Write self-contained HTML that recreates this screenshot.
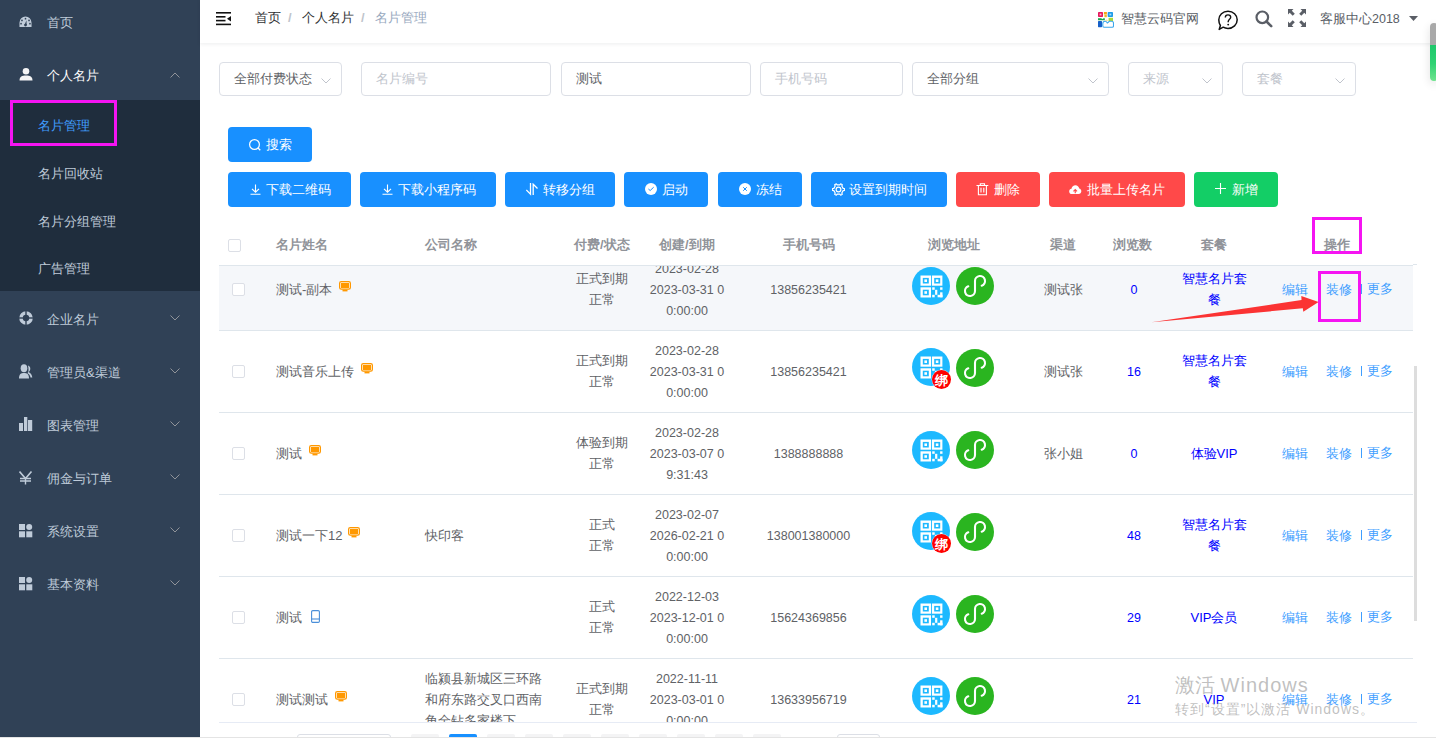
<!DOCTYPE html>
<html><head><meta charset="utf-8"><style>

*{box-sizing:border-box;margin:0;padding:0}
html,body{width:1436px;height:740px;overflow:hidden;background:#fff;font-family:"Liberation Sans",sans-serif;font-size:13px;color:#606266}
.a{position:absolute;white-space:nowrap}
#side{position:absolute;left:0;top:0;width:200px;height:737px;background:#304156;overflow:hidden}
.mi{position:absolute;left:0;width:200px;height:53px;line-height:53px;color:#bfcbd9}
.mi .t{position:absolute;left:47px;top:2px}
.mi svg{position:absolute;left:19px}
.mi .chev{position:absolute;left:170px}
#sub{position:absolute;left:0;top:100px;width:200px;height:191px;background:#1f2d3d}
.si{position:absolute;left:38px;height:20px;line-height:20px;color:#bfcbd9}
.box{position:absolute;border:3px solid #f514f2}
.inp{position:absolute;top:62px;height:34px;border:1px solid #dcdfe6;border-radius:4px;background:#fff;line-height:32px;padding-left:14px;color:#606266}
.inp.ph{color:#c0c4cc}
.inp svg{position:absolute;top:15px}
.btn{position:absolute;height:35px;border-radius:4px;background:#1890ff;color:#fff;line-height:35px}
.btn.red{background:#ff4949}
.btn.grn{background:#13ce66}
.btn svg{position:absolute}
.btn .t{position:absolute;left:38px;top:0}
.th{position:absolute;top:235px;line-height:20px;color:#909399;font-weight:bold}
.ln{position:absolute;line-height:21px;white-space:nowrap}
.c{text-align:center}
.rowb{position:absolute;left:219px;width:1194px;height:1px;background:#ebeef5}
.cb{position:absolute;width:13px;height:13px;border:1px solid #dcdfe6;border-radius:2px;background:#fff}
.lk{color:#409eff}
.blue{color:#0000ff}

</style></head><body>
<div id="side">
<div class="mi" style="top:-6px">
    <svg style="top:21.5px" width="13" height="11.5" viewBox="0 0 14 12" preserveAspectRatio="none"><path d="M7 0.5A6.5 6.5 0 0 0 0.5 7v4.5h13V7A6.5 6.5 0 0 0 7 0.5z" fill="#bfcbd9"/><circle cx="7" cy="2.8" r="0.9" fill="#304156"/><circle cx="3.2" cy="4.6" r="0.9" fill="#304156"/><circle cx="10.8" cy="4.6" r="0.9" fill="#304156"/><circle cx="2.2" cy="8" r="0.9" fill="#304156"/><circle cx="11.8" cy="8" r="0.9" fill="#304156"/><path d="M6 9.5L8 4.5L8.2 9.5z" fill="#304156"/><circle cx="7" cy="9.5" r="1.5" fill="#304156"/></svg>
    <span class="t">首页</span></div>
<div class="mi" style="top:47px;color:#fff">
    <svg style="top:21px" width="14" height="13" viewBox="0 0 14 13"><circle cx="7" cy="3.3" r="3.3" fill="#f4f4f5"/><path d="M0.5 12.5C0.5 8.5 3 7.5 7 7.5S13.5 8.5 13.5 12.5z" fill="#f4f4f5"/></svg>
    <span class="t">个人名片</span>
    <svg class="chev" style="top:25px" width="10" height="6" viewBox="0 0 10 6"><path d="M0.5 5.5L5 1L9.5 5.5" stroke="#909399" stroke-width="1" fill="none"/></svg></div>
<div id="sub">
    <div class="si" style="top:16px;color:#409eff">名片管理</div>
    <div class="si" style="top:64px">名片回收站</div>
    <div class="si" style="top:112px">名片分组管理</div>
    <div class="si" style="top:159px">广告管理</div></div>
<div class="mi" style="top:291px"><svg style="top:20px" width="14" height="14" viewBox="0 0 14 14"><circle cx="7" cy="7" r="5" stroke="#bfcbd9" stroke-width="3.6" fill="none"/><rect x="6.3" y="0" width="1.4" height="14" fill="#304156"/><rect x="0" y="6.3" width="14" height="1.4" fill="#304156"/></svg><span class="t">企业名片</span><svg class="chev" style="top:24px" width="10" height="6" viewBox="0 0 10 6"><path d="M0.5 0.5L5 5L9.5 0.5" stroke="#909399" stroke-width="1" fill="none"/></svg></div>
<div class="mi" style="top:344px"><svg style="top:20px" width="14" height="15" viewBox="0 0 14 15"><ellipse cx="5" cy="4.3" rx="3.3" ry="4" fill="#bfcbd9"/><path d="M0 14.5C0 10 2 9 5 9S10 10 10 14.5z" fill="#bfcbd9"/><path d="M9 1.5C10.5 2 11.3 3 11.3 4.8C11.3 6.3 10.5 7.5 9.5 8C12 9 13 11 13.3 13.5H11.5C11.2 11.5 10.3 10 8.5 9.2C9.5 8 10 6.5 9 1.5z" fill="#bfcbd9"/></svg><span class="t">管理员&amp;渠道</span><svg class="chev" style="top:24px" width="10" height="6" viewBox="0 0 10 6"><path d="M0.5 0.5L5 5L9.5 0.5" stroke="#909399" stroke-width="1" fill="none"/></svg></div>
<div class="mi" style="top:397px"><svg style="top:20px" width="14" height="14" viewBox="0 0 14 14"><rect x="0" y="6" width="4" height="8" fill="#bfcbd9"/><rect x="5" y="0" width="3.3" height="14" fill="#bfcbd9"/><rect x="9" y="3" width="4.2" height="11" fill="#bfcbd9"/></svg><span class="t">图表管理</span><svg class="chev" style="top:24px" width="10" height="6" viewBox="0 0 10 6"><path d="M0.5 0.5L5 5L9.5 0.5" stroke="#909399" stroke-width="1" fill="none"/></svg></div>
<div class="mi" style="top:450px"><svg style="top:21px" width="14" height="14" viewBox="0 0 14 14"><path d="M0.5 0.5L6.5 7.5L12.5 0.5" stroke="#bfcbd9" stroke-width="1.6" fill="none"/><path d="M1 7.5H12M1 10H12M6.5 7.5V13.5" stroke="#bfcbd9" stroke-width="1.4" fill="none"/></svg><span class="t">佣金与订单</span><svg class="chev" style="top:24px" width="10" height="6" viewBox="0 0 10 6"><path d="M0.5 0.5L5 5L9.5 0.5" stroke="#909399" stroke-width="1" fill="none"/></svg></div>
<div class="mi" style="top:503px"><svg style="top:21px" width="14" height="14" viewBox="0 0 14 14"><rect x="0" y="0" width="6" height="6" fill="#bfcbd9"/><circle cx="10.2" cy="3" r="3" fill="#bfcbd9"/><rect x="0" y="7.3" width="6" height="6" fill="#bfcbd9"/><rect x="7.3" y="7.3" width="6" height="6" fill="#bfcbd9"/></svg><span class="t">系统设置</span><svg class="chev" style="top:24px" width="10" height="6" viewBox="0 0 10 6"><path d="M0.5 0.5L5 5L9.5 0.5" stroke="#909399" stroke-width="1" fill="none"/></svg></div>
<div class="mi" style="top:556px"><svg style="top:21px" width="14" height="14" viewBox="0 0 14 14"><rect x="0" y="0" width="6" height="6" fill="#bfcbd9"/><circle cx="10.2" cy="3" r="3" fill="#bfcbd9"/><rect x="0" y="7.3" width="6" height="6" fill="#bfcbd9"/><rect x="7.3" y="7.3" width="6" height="6" fill="#bfcbd9"/></svg><span class="t">基本资料</span><svg class="chev" style="top:24px" width="10" height="6" viewBox="0 0 10 6"><path d="M0.5 0.5L5 5L9.5 0.5" stroke="#909399" stroke-width="1" fill="none"/></svg></div>
</div>
<div class="box" style="left:10px;top:100px;width:107px;height:46px"></div>

<div class="a" style="left:200px;top:0;width:1236px;height:43px;background:#fff;box-shadow:0 1px 4px rgba(0,21,41,.08)"></div>
<svg class="a" style="left:216px;top:11px" width="16" height="15" viewBox="0 0 16 15"><rect x="0" y="1" width="15" height="1.6" fill="#111"/><rect x="0" y="5" width="9.5" height="1.6" fill="#111"/><rect x="0" y="8.8" width="9.5" height="1.6" fill="#111"/><rect x="0" y="12.6" width="15" height="1.6" fill="#111"/><path d="M15 5L11 7.7L15 10.4z" fill="#111"/></svg>
<div class="a" style="left:255px;top:8px;line-height:20px;color:#303133">首页</div>
<div class="a" style="left:288px;top:8px;line-height:20px;color:#c0c4cc;font-weight:bold">/</div>
<div class="a" style="left:302px;top:8px;line-height:20px;color:#303133">个人名片</div>
<div class="a" style="left:361px;top:8px;line-height:20px;color:#c0c4cc;font-weight:bold">/</div>
<div class="a" style="left:375px;top:8px;line-height:20px;color:#97a8be">名片管理</div>


<svg class="a" style="left:1097px;top:11px" width="17" height="17" viewBox="0 0 17 17"><rect x="1" y="1" width="5" height="5" rx="0.8" fill="#e5195e"/><rect x="2.6" y="2.6" width="1.8" height="1.8" fill="#f7b3c8"/><rect x="6.9" y="1" width="3" height="2.4" fill="#f5a614"/><rect x="7.4" y="3.6" width="2.4" height="2.6" fill="#f5b323"/><rect x="10.7" y="1" width="5.3" height="5" rx="0.8" fill="#1e9be8"/><rect x="12.4" y="2.6" width="1.9" height="1.8" fill="#a9dcf7"/><path d="M1 7.2H4.5L5 8.2L6.5 7.2H7.8V9.3H1z" fill="#17a64a"/><rect x="11.6" y="6.8" width="4.4" height="3.6" fill="#a7d93a"/><path d="M7.8 9.6C8.6 8.5 10.5 8.5 11.3 9.6z" fill="#f8c13c"/><rect x="1" y="10" width="4" height="6.2" rx="0.6" fill="#1660c9"/><path d="M7 16.2H15.2C16 16.2 16.5 15.6 16.5 14.9V12.2C16.5 11.2 15.8 10.3 14.6 10.3H12.8C12.3 10.3 11.9 10.6 11.6 11L10.3 12C9.9 11.2 9.2 10.3 8 10.3C6.8 10.3 5.8 11.4 5.8 12.8V15C5.8 15.7 6.3 16.2 7 16.2z" fill="#fff" stroke="#3aa6ec" stroke-width="1.1"/></svg>
<div class="a" style="left:1121px;top:9px;line-height:20px;color:#5a5e66">智慧云码官网</div>
<svg class="a" style="left:1217px;top:10px" width="22" height="21" viewBox="0 0 22 21"><path d="M11 1.2C16.2 1.2 20.2 5 20.2 9.8C20.2 14.6 16.2 18.4 11 18.4C9 18.4 7.5 18 6.2 17.2L2.2 19.4L3.4 15.5C2.3 13.9 1.8 12 1.8 9.8C1.8 5 5.8 1.2 11 1.2z" stroke="#111" stroke-width="1.5" fill="none" stroke-linejoin="round"/><path d="M8.3 7.6C8.3 6 9.5 4.9 11 4.9C12.5 4.9 13.7 5.9 13.7 7.3C13.7 9.2 11.2 9.5 11.2 11.6V12.3" stroke="#111" stroke-width="1.4" fill="none"/><circle cx="11.2" cy="14.6" r="0.95" fill="#111"/></svg>
<svg class="a" style="left:1255px;top:10px" width="18" height="18" viewBox="0 0 18 18"><circle cx="7.3" cy="7.3" r="5.8" stroke="#5a5e66" stroke-width="2.2" fill="none"/><path d="M11.5 11.5L16.2 16.2" stroke="#5a5e66" stroke-width="2.6" stroke-linecap="round"/></svg>
<svg class="a" style="left:1288px;top:9px" width="18" height="18" viewBox="0 0 18 18"><g fill="#5a5e66"><path d="M0 0H5.5L3.8 1.7L6.8 4.7L4.7 6.8L1.7 3.8L0 5.5z"/><path d="M18 0V5.5L16.3 3.8L13.3 6.8L11.2 4.7L14.2 1.7L12.5 0z"/><path d="M0 18V12.5L1.7 14.2L4.7 11.2L6.8 13.3L3.8 16.3L5.5 18z"/><path d="M18 18H12.5L14.2 16.3L11.2 13.3L13.3 11.2L16.3 14.2L18 12.5z"/></g></svg>
<div class="a" style="left:1320px;top:9px;line-height:20px;color:#5a5e66">客服中心<span style="font-size:12.5px">2018</span></div>
<svg class="a" style="left:1409px;top:16px" width="9" height="5" viewBox="0 0 9 5"><path d="M0 0H9L4.5 5z" fill="#5a5e66"/></svg>
<div class="a" style="left:1430px;top:23px;width:8px;height:58px;border-radius:4px;box-shadow:0 3px 10px rgba(0,0,0,.12)"></div>
<div class="a" style="left:1430px;top:23px;width:8px;height:58px;border-radius:4px;background:linear-gradient(#a9a9a9 0,#a9a9a9 38%,#1ec76b 38%,#2fd273 70%,#6fe38e 100%)"></div>

<div class="inp" style="left:219px;width:123px">全部付费状态<svg style="left:101px" width="10" height="6" viewBox="0 0 10 6"><path d="M0.5 0.5L5 5L9.5 0.5" stroke="#c0c4cc" stroke-width="1" fill="none"/></svg></div>
<div class="inp ph" style="left:361px;width:190px">名片编号</div>
<div class="inp" style="left:561px;width:190px">测试</div>
<div class="inp ph" style="left:760px;width:143px">手机号码</div>
<div class="inp" style="left:912px;width:197px">全部分组<svg style="left:175px" width="10" height="6" viewBox="0 0 10 6"><path d="M0.5 0.5L5 5L9.5 0.5" stroke="#c0c4cc" stroke-width="1" fill="none"/></svg></div>
<div class="inp ph" style="left:1128px;width:95px">来源<svg style="left:73px" width="10" height="6" viewBox="0 0 10 6"><path d="M0.5 0.5L5 5L9.5 0.5" stroke="#c0c4cc" stroke-width="1" fill="none"/></svg></div>
<div class="inp ph" style="left:1242px;width:114px">套餐<svg style="left:92px" width="10" height="6" viewBox="0 0 10 6"><path d="M0.5 0.5L5 5L9.5 0.5" stroke="#c0c4cc" stroke-width="1" fill="none"/></svg></div>
<div class="btn" style="left:228px;top:127px;width:84px"><svg style="left:21px;top:12px" width="12" height="12" viewBox="0 0 12 12"><circle cx="5.5" cy="5.5" r="4.9" stroke="#fff" stroke-width="1.2" fill="none"/><path d="M9 9L11.3 11.3" stroke="#fff" stroke-width="1.3"/></svg><span class="t">搜索</span></div>
<div class="btn " style="left:228px;top:172px;width:123px"><svg style="left:22px;top:12px" width="11" height="11" viewBox="0 0 11 11"><path d="M5.5 0.5V8M2 4.8L5.5 8.2L9 4.8M0.5 10.3H10.5" stroke="#fff" stroke-width="1.1" fill="none"/></svg><span class="t">下载二维码</span></div>
<div class="btn " style="left:360px;top:172px;width:136px"><svg style="left:22px;top:12px" width="11" height="11" viewBox="0 0 11 11"><path d="M5.5 0.5V8M2 4.8L5.5 8.2L9 4.8M0.5 10.3H10.5" stroke="#fff" stroke-width="1.1" fill="none"/></svg><span class="t">下载小程序码</span></div>
<div class="btn " style="left:505px;top:172px;width:110px"><svg style="left:21px;top:11px" width="12" height="13" viewBox="0 0 12 13"><path d="M4.5 0V11.2L0.3 7M7.2 12V1.2L11.5 5.5" stroke="#fff" stroke-width="1.3" fill="none"/></svg><span class="t">转移分组</span></div>
<div class="btn " style="left:624px;top:172px;width:84px"><svg style="left:21px;top:11px" width="12" height="12" viewBox="0 0 12 12"><circle cx="6" cy="6" r="6" fill="#fff"/><path d="M3.4 6L5.2 7.5L8.7 4.2" stroke="#1890ff" stroke-width="1" fill="none"/></svg><span class="t">启动</span></div>
<div class="btn " style="left:718px;top:172px;width:84px"><svg style="left:21px;top:11px" width="12" height="12" viewBox="0 0 12 12"><circle cx="6" cy="6" r="6" fill="#fff"/><path d="M4.2 4.2L7.8 7.8M7.8 4.2L4.2 7.8" stroke="#1890ff" stroke-width="1" fill="none"/></svg><span class="t">冻结</span></div>
<div class="btn " style="left:811px;top:172px;width:136px"><svg style="left:21px;top:11px" width="13" height="13" viewBox="0 0 12 12"><path d="M10.27 4.94L11.53 5.12L11.53 6.88L10.27 7.06L9.06 9.17L9.52 10.35L8.01 11.23L7.21 10.23L4.79 10.23L3.99 11.23L2.48 10.35L2.94 9.17L1.73 7.06L0.47 6.88L0.47 5.12L1.73 4.94L2.94 2.83L2.48 1.65L3.99 0.77L4.79 1.77L7.21 1.77L8.01 0.77L9.52 1.65L9.06 2.83z" stroke="#fff" stroke-width="1.1" fill="none" stroke-linejoin="round"/><circle cx="6" cy="6" r="2.2" stroke="#fff" stroke-width="1.1" fill="none"/></svg><span class="t">设置到期时间</span></div>
<div class="btn red" style="left:956px;top:172px;width:84px"><svg style="left:20px;top:11px" width="13" height="13" viewBox="0 0 13 13"><path d="M0.5 2.5H12.3M4.3 2.5V0.7H8.5V2.5M2.4 2.5V11.8H10.4V2.5M5 4.8V9.5M7.8 4.8V9.5" stroke="#fff" stroke-width="1.1" fill="none"/></svg><span class="t">删除</span></div>
<div class="btn red" style="left:1049px;top:172px;width:136px"><svg style="left:20px;top:13px" width="12.5" height="9.5" viewBox="0 0 14 11" preserveAspectRatio="none"><path d="M3.5 10.5C1.5 10.5 0.2 9.2 0.2 7.4C0.2 5.8 1.3 4.6 2.8 4.4C3.2 2 5 0.3 7.2 0.3C9.4 0.3 11.1 1.9 11.4 4C12.9 4.2 13.8 5.6 13.8 7.2C13.8 9 12.5 10.5 10.7 10.5z" fill="#fff"/><path d="M7 9.5V5.5M5 7.3L7 5.3L9 7.3" stroke="#ff4949" stroke-width="1.3" fill="none"/></svg><span class="t">批量上传名片</span></div>
<div class="btn grn" style="left:1194px;top:172px;width:84px"><svg style="left:21px;top:11px" width="11" height="11" viewBox="0 0 11 11"><path d="M5.5 0V11M0 5.5H11" stroke="#fff" stroke-width="1.1"/></svg><span class="t">新增</span></div>
<div class="cb" style="left:228px;top:239px"></div>
<div class="th" style="left:276px">名片姓名</div>
<div class="th" style="left:425px">公司名称</div>
<div class="th" style="left:574px">付费/状态</div>
<div class="th" style="left:659px">创建/到期</div>
<div class="th" style="left:783px">手机号码</div>
<div class="th" style="left:928px">浏览地址</div>
<div class="th" style="left:1050px">渠道</div>
<div class="th" style="left:1113px">浏览数</div>
<div class="th" style="left:1201px">套餐</div>
<div class="th" style="left:1324px">操作</div>
<div class="a" style="left:219px;top:265px;width:1194px;height:1px;background:#dfe6ec"></div><div class="a" style="left:1413px;top:264px;width:4px;height:1px;background:#dfe6ec"></div>
<div class="a" style="left:0;top:266px;width:1436px;height:456px;overflow:hidden">
<div class="a" style="left:219px;top:-18px;width:1194px;height:82px;background:#f5f7fa"></div>
<div class="a" style="left:219px;top:64px;width:1194px;height:1px;background:#dfe6ec"></div>
<div class="cb" style="left:232px;top:17px"></div>
<div class="ln" style="left:276px;top:12.5px">测试-副本</div>
<svg class="a" style="left:339px;top:15px" width="12" height="11" viewBox="0 0 12 11"><rect x="0.6" y="0.6" width="10.8" height="7.6" rx="1.6" stroke="#ff9800" stroke-width="1.2" fill="#fff3e0"/><rect x="2" y="2" width="8" height="5" fill="#ff9800"/><rect x="3.5" y="8.6" width="5" height="1.8" fill="#ff9800"/></svg>
<div class="ln c " style="top:2.0px;left:502px;width:200px;">正式到期</div>
<div class="ln c " style="top:23.0px;left:502px;width:200px;">正常</div>
<div class="ln c " style="top:-8.5px;left:587px;width:200px;font-size:12.5px;margin-top:1px;">2023-02-28</div>
<div class="ln c " style="top:12.5px;left:587px;width:200px;font-size:12.5px;margin-top:1px;">2023-03-31 0</div>
<div class="ln c " style="top:33.5px;left:587px;width:200px;font-size:12.5px;margin-top:1px;">0:00:00</div>
<div class="ln c " style="top:12.5px;left:708.5px;width:200px;font-size:12.5px;margin-top:1px;">13856235421</div>
<svg class="a" style="left:912px;top:1px" width="40" height="42" viewBox="0 0 40 42"><circle cx="19" cy="19" r="19" fill="#1db9ff"/><rect x="8.5" y="8.5" width="10.5" height="10.2" fill="#fff"/><rect x="10.8" y="10.9" width="6" height="5.6" fill="#1db9ff"/><rect x="12.4" y="12.4" width="2.6" height="2.6" fill="#fff"/><rect x="19.9" y="8.5" width="10.5" height="10.2" fill="#fff"/><rect x="22.2" y="10.9" width="6" height="5.6" fill="#1db9ff"/><rect x="23.799999999999997" y="12.4" width="2.6" height="2.6" fill="#fff"/><rect x="8.5" y="20.3" width="10.5" height="10.2" fill="#fff"/><rect x="10.8" y="22.7" width="6" height="5.6" fill="#1db9ff"/><rect x="12.4" y="24.2" width="2.6" height="2.6" fill="#fff"/><rect x="20.2" y="20.3" width="2.5" height="2.5" fill="#fff"/><rect x="28.1" y="20.3" width="2.4" height="2.5" fill="#fff"/><rect x="23.1" y="22.8" width="2.2" height="5" fill="#fff"/><rect x="25.6" y="27.8" width="4.9" height="2.5" fill="#fff"/><rect x="28.1" y="25.3" width="2.4" height="5" fill="#fff"/><rect x="20.2" y="27.8" width="2.5" height="2.5" fill="#fff"/></svg>
<svg class="a" style="left:956px;top:1px" width="38" height="38" viewBox="0 0 38 38"><circle cx="19" cy="19" r="19" fill="#2ab520"/><path d="M12.3 19.3A5 5 0 1 0 19 24V14A5 5 0 1 1 25.7 18.7" stroke="#fff" stroke-width="2.1" fill="none" stroke-linecap="round"/></svg>
<div class="ln c " style="top:12.5px;left:963px;width:200px;">测试张</div>
<div class="ln c blue" style="top:12.5px;left:1034px;width:200px;font-size:12.5px;margin-top:1px;">0</div>
<div class="ln c blue" style="top:2.0px;left:1114px;width:200px;">智慧名片套</div>
<div class="ln c blue" style="top:23.0px;left:1114px;width:200px;">餐</div>
<div class="ln lk" style="left:1282px;top:12.5px">编辑</div>
<div class="ln lk" style="left:1326px;top:12.5px">装修</div>
<div class="a" style="left:1361px;top:18px;width:1.3px;height:10px;background:#409eff"></div>
<div class="ln lk" style="left:1367px;top:11.5px">更多</div>
<div class="a" style="left:219px;top:146px;width:1194px;height:1px;background:#dfe6ec"></div>
<div class="cb" style="left:232px;top:99px"></div>
<div class="ln" style="left:276px;top:94.5px">测试音乐上传</div>
<svg class="a" style="left:361px;top:97px" width="12" height="11" viewBox="0 0 12 11"><rect x="0.6" y="0.6" width="10.8" height="7.6" rx="1.6" stroke="#ff9800" stroke-width="1.2" fill="#fff3e0"/><rect x="2" y="2" width="8" height="5" fill="#ff9800"/><rect x="3.5" y="8.6" width="5" height="1.8" fill="#ff9800"/></svg>
<div class="ln c " style="top:84.0px;left:502px;width:200px;">正式到期</div>
<div class="ln c " style="top:105.0px;left:502px;width:200px;">正常</div>
<div class="ln c " style="top:73.5px;left:587px;width:200px;font-size:12.5px;margin-top:1px;">2023-02-28</div>
<div class="ln c " style="top:94.5px;left:587px;width:200px;font-size:12.5px;margin-top:1px;">2023-03-31 0</div>
<div class="ln c " style="top:115.5px;left:587px;width:200px;font-size:12.5px;margin-top:1px;">0:00:00</div>
<div class="ln c " style="top:94.5px;left:708.5px;width:200px;font-size:12.5px;margin-top:1px;">13856235421</div>
<svg class="a" style="left:912px;top:82px" width="40" height="42" viewBox="0 0 40 42"><circle cx="19" cy="19" r="19" fill="#1db9ff"/><rect x="8.5" y="8.5" width="10.5" height="10.2" fill="#fff"/><rect x="10.8" y="10.9" width="6" height="5.6" fill="#1db9ff"/><rect x="12.4" y="12.4" width="2.6" height="2.6" fill="#fff"/><rect x="19.9" y="8.5" width="10.5" height="10.2" fill="#fff"/><rect x="22.2" y="10.9" width="6" height="5.6" fill="#1db9ff"/><rect x="23.799999999999997" y="12.4" width="2.6" height="2.6" fill="#fff"/><rect x="8.5" y="20.3" width="10.5" height="10.2" fill="#fff"/><rect x="10.8" y="22.7" width="6" height="5.6" fill="#1db9ff"/><rect x="12.4" y="24.2" width="2.6" height="2.6" fill="#fff"/><rect x="20.2" y="20.3" width="2.5" height="2.5" fill="#fff"/><rect x="28.1" y="20.3" width="2.4" height="2.5" fill="#fff"/><rect x="23.1" y="22.8" width="2.2" height="5" fill="#fff"/><rect x="25.6" y="27.8" width="4.9" height="2.5" fill="#fff"/><rect x="28.1" y="25.3" width="2.4" height="5" fill="#fff"/><rect x="20.2" y="27.8" width="2.5" height="2.5" fill="#fff"/><circle cx="29.5" cy="31.5" r="10" fill="#fff" fill-opacity="0.6"/><circle cx="29.5" cy="31.5" r="9.5" fill="#f00"/><text x="29.5" y="36.6" text-anchor="middle" font-size="12.5" fill="#fff" font-family="Liberation Sans, sans-serif" font-weight="bold">绑</text></svg>
<svg class="a" style="left:956px;top:83px" width="38" height="38" viewBox="0 0 38 38"><circle cx="19" cy="19" r="19" fill="#2ab520"/><path d="M12.3 19.3A5 5 0 1 0 19 24V14A5 5 0 1 1 25.7 18.7" stroke="#fff" stroke-width="2.1" fill="none" stroke-linecap="round"/></svg>
<div class="ln c " style="top:94.5px;left:963px;width:200px;">测试张</div>
<div class="ln c blue" style="top:94.5px;left:1034px;width:200px;font-size:12.5px;margin-top:1px;">16</div>
<div class="ln c blue" style="top:84.0px;left:1114px;width:200px;">智慧名片套</div>
<div class="ln c blue" style="top:105.0px;left:1114px;width:200px;">餐</div>
<div class="ln lk" style="left:1282px;top:94.5px">编辑</div>
<div class="ln lk" style="left:1326px;top:94.5px">装修</div>
<div class="a" style="left:1361px;top:100px;width:1.3px;height:10px;background:#409eff"></div>
<div class="ln lk" style="left:1367px;top:93.5px">更多</div>
<div class="a" style="left:219px;top:228px;width:1194px;height:1px;background:#dfe6ec"></div>
<div class="cb" style="left:232px;top:181px"></div>
<div class="ln" style="left:276px;top:176.5px">测试</div>
<svg class="a" style="left:309px;top:179px" width="12" height="11" viewBox="0 0 12 11"><rect x="0.6" y="0.6" width="10.8" height="7.6" rx="1.6" stroke="#ff9800" stroke-width="1.2" fill="#fff3e0"/><rect x="2" y="2" width="8" height="5" fill="#ff9800"/><rect x="3.5" y="8.6" width="5" height="1.8" fill="#ff9800"/></svg>
<div class="ln c " style="top:166.0px;left:502px;width:200px;">体验到期</div>
<div class="ln c " style="top:187.0px;left:502px;width:200px;">正常</div>
<div class="ln c " style="top:155.5px;left:587px;width:200px;font-size:12.5px;margin-top:1px;">2023-02-28</div>
<div class="ln c " style="top:176.5px;left:587px;width:200px;font-size:12.5px;margin-top:1px;">2023-03-07 0</div>
<div class="ln c " style="top:197.5px;left:587px;width:200px;font-size:12.5px;margin-top:1px;">9:31:43</div>
<div class="ln c " style="top:176.5px;left:708.5px;width:200px;font-size:12.5px;margin-top:1px;">1388888888</div>
<svg class="a" style="left:912px;top:165px" width="40" height="42" viewBox="0 0 40 42"><circle cx="19" cy="19" r="19" fill="#1db9ff"/><rect x="8.5" y="8.5" width="10.5" height="10.2" fill="#fff"/><rect x="10.8" y="10.9" width="6" height="5.6" fill="#1db9ff"/><rect x="12.4" y="12.4" width="2.6" height="2.6" fill="#fff"/><rect x="19.9" y="8.5" width="10.5" height="10.2" fill="#fff"/><rect x="22.2" y="10.9" width="6" height="5.6" fill="#1db9ff"/><rect x="23.799999999999997" y="12.4" width="2.6" height="2.6" fill="#fff"/><rect x="8.5" y="20.3" width="10.5" height="10.2" fill="#fff"/><rect x="10.8" y="22.7" width="6" height="5.6" fill="#1db9ff"/><rect x="12.4" y="24.2" width="2.6" height="2.6" fill="#fff"/><rect x="20.2" y="20.3" width="2.5" height="2.5" fill="#fff"/><rect x="28.1" y="20.3" width="2.4" height="2.5" fill="#fff"/><rect x="23.1" y="22.8" width="2.2" height="5" fill="#fff"/><rect x="25.6" y="27.8" width="4.9" height="2.5" fill="#fff"/><rect x="28.1" y="25.3" width="2.4" height="5" fill="#fff"/><rect x="20.2" y="27.8" width="2.5" height="2.5" fill="#fff"/></svg>
<svg class="a" style="left:956px;top:165px" width="38" height="38" viewBox="0 0 38 38"><circle cx="19" cy="19" r="19" fill="#2ab520"/><path d="M12.3 19.3A5 5 0 1 0 19 24V14A5 5 0 1 1 25.7 18.7" stroke="#fff" stroke-width="2.1" fill="none" stroke-linecap="round"/></svg>
<div class="ln c " style="top:176.5px;left:963px;width:200px;">张小姐</div>
<div class="ln c blue" style="top:176.5px;left:1034px;width:200px;font-size:12.5px;margin-top:1px;">0</div>
<div class="ln c blue" style="top:176.5px;left:1114px;width:200px;">体验VIP</div>
<div class="ln lk" style="left:1282px;top:176.5px">编辑</div>
<div class="ln lk" style="left:1326px;top:176.5px">装修</div>
<div class="a" style="left:1361px;top:182px;width:1.3px;height:10px;background:#409eff"></div>
<div class="ln lk" style="left:1367px;top:175.5px">更多</div>
<div class="a" style="left:219px;top:310px;width:1194px;height:1px;background:#dfe6ec"></div>
<div class="cb" style="left:232px;top:263px"></div>
<div class="ln" style="left:276px;top:258.5px">测试一下12</div>
<svg class="a" style="left:348px;top:261px" width="12" height="11" viewBox="0 0 12 11"><rect x="0.6" y="0.6" width="10.8" height="7.6" rx="1.6" stroke="#ff9800" stroke-width="1.2" fill="#fff3e0"/><rect x="2" y="2" width="8" height="5" fill="#ff9800"/><rect x="3.5" y="8.6" width="5" height="1.8" fill="#ff9800"/></svg>
<div class="ln " style="top:258.5px;left:425px;">快印客</div>
<div class="ln c " style="top:248.0px;left:502px;width:200px;">正式</div>
<div class="ln c " style="top:269.0px;left:502px;width:200px;">正常</div>
<div class="ln c " style="top:237.5px;left:587px;width:200px;font-size:12.5px;margin-top:1px;">2023-02-07</div>
<div class="ln c " style="top:258.5px;left:587px;width:200px;font-size:12.5px;margin-top:1px;">2026-02-21 0</div>
<div class="ln c " style="top:279.5px;left:587px;width:200px;font-size:12.5px;margin-top:1px;">0:00:00</div>
<div class="ln c " style="top:258.5px;left:708.5px;width:200px;font-size:12.5px;margin-top:1px;">138001380000</div>
<svg class="a" style="left:912px;top:246px" width="40" height="42" viewBox="0 0 40 42"><circle cx="19" cy="19" r="19" fill="#1db9ff"/><rect x="8.5" y="8.5" width="10.5" height="10.2" fill="#fff"/><rect x="10.8" y="10.9" width="6" height="5.6" fill="#1db9ff"/><rect x="12.4" y="12.4" width="2.6" height="2.6" fill="#fff"/><rect x="19.9" y="8.5" width="10.5" height="10.2" fill="#fff"/><rect x="22.2" y="10.9" width="6" height="5.6" fill="#1db9ff"/><rect x="23.799999999999997" y="12.4" width="2.6" height="2.6" fill="#fff"/><rect x="8.5" y="20.3" width="10.5" height="10.2" fill="#fff"/><rect x="10.8" y="22.7" width="6" height="5.6" fill="#1db9ff"/><rect x="12.4" y="24.2" width="2.6" height="2.6" fill="#fff"/><rect x="20.2" y="20.3" width="2.5" height="2.5" fill="#fff"/><rect x="28.1" y="20.3" width="2.4" height="2.5" fill="#fff"/><rect x="23.1" y="22.8" width="2.2" height="5" fill="#fff"/><rect x="25.6" y="27.8" width="4.9" height="2.5" fill="#fff"/><rect x="28.1" y="25.3" width="2.4" height="5" fill="#fff"/><rect x="20.2" y="27.8" width="2.5" height="2.5" fill="#fff"/><circle cx="29.5" cy="31.5" r="10" fill="#fff" fill-opacity="0.6"/><circle cx="29.5" cy="31.5" r="9.5" fill="#f00"/><text x="29.5" y="36.6" text-anchor="middle" font-size="12.5" fill="#fff" font-family="Liberation Sans, sans-serif" font-weight="bold">绑</text></svg>
<svg class="a" style="left:956px;top:247px" width="38" height="38" viewBox="0 0 38 38"><circle cx="19" cy="19" r="19" fill="#2ab520"/><path d="M12.3 19.3A5 5 0 1 0 19 24V14A5 5 0 1 1 25.7 18.7" stroke="#fff" stroke-width="2.1" fill="none" stroke-linecap="round"/></svg>
<div class="ln c blue" style="top:258.5px;left:1034px;width:200px;font-size:12.5px;margin-top:1px;">48</div>
<div class="ln c blue" style="top:248.0px;left:1114px;width:200px;">智慧名片套</div>
<div class="ln c blue" style="top:269.0px;left:1114px;width:200px;">餐</div>
<div class="ln lk" style="left:1282px;top:258.5px">编辑</div>
<div class="ln lk" style="left:1326px;top:258.5px">装修</div>
<div class="a" style="left:1361px;top:264px;width:1.3px;height:10px;background:#409eff"></div>
<div class="ln lk" style="left:1367px;top:257.5px">更多</div>
<div class="a" style="left:219px;top:392px;width:1194px;height:1px;background:#dfe6ec"></div>
<div class="cb" style="left:232px;top:345px"></div>
<div class="ln" style="left:276px;top:340.5px">测试</div>
<svg class="a" style="left:311px;top:344px" width="9" height="13" viewBox="0 0 9 13"><rect x="0.6" y="0.6" width="7.8" height="11.8" rx="1.2" stroke="#4a8fd9" stroke-width="1.1" fill="none"/><path d="M0.6 9H8.4" stroke="#4a8fd9" stroke-width="1.1"/></svg>
<div class="ln c " style="top:330.0px;left:502px;width:200px;">正式</div>
<div class="ln c " style="top:351.0px;left:502px;width:200px;">正常</div>
<div class="ln c " style="top:319.5px;left:587px;width:200px;font-size:12.5px;margin-top:1px;">2022-12-03</div>
<div class="ln c " style="top:340.5px;left:587px;width:200px;font-size:12.5px;margin-top:1px;">2023-12-01 0</div>
<div class="ln c " style="top:361.5px;left:587px;width:200px;font-size:12.5px;margin-top:1px;">0:00:00</div>
<div class="ln c " style="top:340.5px;left:708.5px;width:200px;font-size:12.5px;margin-top:1px;">15624369856</div>
<svg class="a" style="left:912px;top:329px" width="40" height="42" viewBox="0 0 40 42"><circle cx="19" cy="19" r="19" fill="#1db9ff"/><rect x="8.5" y="8.5" width="10.5" height="10.2" fill="#fff"/><rect x="10.8" y="10.9" width="6" height="5.6" fill="#1db9ff"/><rect x="12.4" y="12.4" width="2.6" height="2.6" fill="#fff"/><rect x="19.9" y="8.5" width="10.5" height="10.2" fill="#fff"/><rect x="22.2" y="10.9" width="6" height="5.6" fill="#1db9ff"/><rect x="23.799999999999997" y="12.4" width="2.6" height="2.6" fill="#fff"/><rect x="8.5" y="20.3" width="10.5" height="10.2" fill="#fff"/><rect x="10.8" y="22.7" width="6" height="5.6" fill="#1db9ff"/><rect x="12.4" y="24.2" width="2.6" height="2.6" fill="#fff"/><rect x="20.2" y="20.3" width="2.5" height="2.5" fill="#fff"/><rect x="28.1" y="20.3" width="2.4" height="2.5" fill="#fff"/><rect x="23.1" y="22.8" width="2.2" height="5" fill="#fff"/><rect x="25.6" y="27.8" width="4.9" height="2.5" fill="#fff"/><rect x="28.1" y="25.3" width="2.4" height="5" fill="#fff"/><rect x="20.2" y="27.8" width="2.5" height="2.5" fill="#fff"/></svg>
<svg class="a" style="left:956px;top:329px" width="38" height="38" viewBox="0 0 38 38"><circle cx="19" cy="19" r="19" fill="#2ab520"/><path d="M12.3 19.3A5 5 0 1 0 19 24V14A5 5 0 1 1 25.7 18.7" stroke="#fff" stroke-width="2.1" fill="none" stroke-linecap="round"/></svg>
<div class="ln c blue" style="top:340.5px;left:1034px;width:200px;font-size:12.5px;margin-top:1px;">29</div>
<div class="ln c blue" style="top:340.5px;left:1114px;width:200px;">VIP会员</div>
<div class="ln lk" style="left:1282px;top:340.5px">编辑</div>
<div class="ln lk" style="left:1326px;top:340.5px">装修</div>
<div class="a" style="left:1361px;top:346px;width:1.3px;height:10px;background:#409eff"></div>
<div class="ln lk" style="left:1367px;top:339.5px">更多</div>
<div class="a" style="left:219px;top:474px;width:1194px;height:1px;background:#dfe6ec"></div>
<div class="cb" style="left:232px;top:427px"></div>
<div class="ln" style="left:276px;top:422.5px">测试测试</div>
<svg class="a" style="left:335px;top:425px" width="12" height="11" viewBox="0 0 12 11"><rect x="0.6" y="0.6" width="10.8" height="7.6" rx="1.6" stroke="#ff9800" stroke-width="1.2" fill="#fff3e0"/><rect x="2" y="2" width="8" height="5" fill="#ff9800"/><rect x="3.5" y="8.6" width="5" height="1.8" fill="#ff9800"/></svg>
<div class="ln " style="top:401.5px;left:425px;">临颍县新城区三环路</div>
<div class="ln " style="top:422.5px;left:425px;">和府东路交叉口西南</div>
<div class="ln " style="top:443.5px;left:425px;">角全钻多家楼下</div>
<div class="ln c " style="top:412.0px;left:502px;width:200px;">正式到期</div>
<div class="ln c " style="top:433.0px;left:502px;width:200px;">正常</div>
<div class="ln c " style="top:401.5px;left:587px;width:200px;font-size:12.5px;margin-top:1px;">2022-11-11</div>
<div class="ln c " style="top:422.5px;left:587px;width:200px;font-size:12.5px;margin-top:1px;">2023-03-01 0</div>
<div class="ln c " style="top:443.5px;left:587px;width:200px;font-size:12.5px;margin-top:1px;">0:00:00</div>
<div class="ln c " style="top:422.5px;left:708.5px;width:200px;font-size:12.5px;margin-top:1px;">13633956719</div>
<svg class="a" style="left:912px;top:411px" width="40" height="42" viewBox="0 0 40 42"><circle cx="19" cy="19" r="19" fill="#1db9ff"/><rect x="8.5" y="8.5" width="10.5" height="10.2" fill="#fff"/><rect x="10.8" y="10.9" width="6" height="5.6" fill="#1db9ff"/><rect x="12.4" y="12.4" width="2.6" height="2.6" fill="#fff"/><rect x="19.9" y="8.5" width="10.5" height="10.2" fill="#fff"/><rect x="22.2" y="10.9" width="6" height="5.6" fill="#1db9ff"/><rect x="23.799999999999997" y="12.4" width="2.6" height="2.6" fill="#fff"/><rect x="8.5" y="20.3" width="10.5" height="10.2" fill="#fff"/><rect x="10.8" y="22.7" width="6" height="5.6" fill="#1db9ff"/><rect x="12.4" y="24.2" width="2.6" height="2.6" fill="#fff"/><rect x="20.2" y="20.3" width="2.5" height="2.5" fill="#fff"/><rect x="28.1" y="20.3" width="2.4" height="2.5" fill="#fff"/><rect x="23.1" y="22.8" width="2.2" height="5" fill="#fff"/><rect x="25.6" y="27.8" width="4.9" height="2.5" fill="#fff"/><rect x="28.1" y="25.3" width="2.4" height="5" fill="#fff"/><rect x="20.2" y="27.8" width="2.5" height="2.5" fill="#fff"/></svg>
<svg class="a" style="left:956px;top:411px" width="38" height="38" viewBox="0 0 38 38"><circle cx="19" cy="19" r="19" fill="#2ab520"/><path d="M12.3 19.3A5 5 0 1 0 19 24V14A5 5 0 1 1 25.7 18.7" stroke="#fff" stroke-width="2.1" fill="none" stroke-linecap="round"/></svg>
<div class="ln c blue" style="top:422.5px;left:1034px;width:200px;font-size:12.5px;margin-top:1px;">21</div>
<div class="ln c blue" style="top:422.5px;left:1114px;width:200px;">VIP</div>
<div class="ln lk" style="left:1282px;top:422.5px">编辑</div>
<div class="ln lk" style="left:1326px;top:422.5px">装修</div>
<div class="a" style="left:1361px;top:428px;width:1.3px;height:10px;background:#409eff"></div>
<div class="ln lk" style="left:1367px;top:421.5px">更多</div>
</div>
<div class="a" style="left:219px;top:722px;width:1198px;height:1px;background:#e6ebf5"></div>
<div class="a" style="left:1414px;top:366px;width:3px;height:255px;background:#dddddd"></div>
<div class="a" style="left:297px;top:734px;width:94px;height:8px;border:1px solid #dcdfe6;border-radius:3px"></div>
<div class="a" style="left:411px;top:734px;width:28px;height:8px;background:#f4f4f5;border-radius:2px"></div>
<div class="a" style="left:449px;top:734px;width:28px;height:8px;background:#1890ff;border-radius:2px"></div>
<div class="a" style="left:487px;top:734px;width:28px;height:8px;background:#f4f4f5;border-radius:2px"></div>
<div class="a" style="left:525px;top:734px;width:28px;height:8px;background:#f4f4f5;border-radius:2px"></div>
<div class="a" style="left:563px;top:734px;width:28px;height:8px;background:#f4f4f5;border-radius:2px"></div>
<div class="a" style="left:601px;top:734px;width:28px;height:8px;background:#f4f4f5;border-radius:2px"></div>
<div class="a" style="left:639px;top:734px;width:28px;height:8px;background:#f4f4f5;border-radius:2px"></div>
<div class="a" style="left:677px;top:734px;width:28px;height:8px;background:#f4f4f5;border-radius:2px"></div>
<div class="a" style="left:715px;top:734px;width:28px;height:8px;background:#f4f4f5;border-radius:2px"></div>
<div class="a" style="left:753px;top:734px;width:28px;height:8px;background:#f4f4f5;border-radius:2px"></div>
<div class="a" style="left:837px;top:734px;width:43px;height:8px;border:1px solid #dcdfe6;border-radius:3px"></div>
<div class="a" style="left:0;top:737px;width:1436px;height:3px;background:#fff;border-top:1px solid #e4e4e4"></div>
<div class="box" style="left:1312px;top:217px;width:50px;height:37px"></div>
<div class="box" style="left:1318px;top:271px;width:43px;height:51px"></div>
<svg class="a" style="left:0;top:0" width="1436" height="740"><path d="M1151.4 322.3L1301.5 300L1301.3 296.1L1318.6 302.1L1303.3 311.8L1302.8 308.3z" fill="#fb3333"/></svg>
<div class="a" style="left:1175px;top:672px;font-size:20px;line-height:26px;color:rgba(150,150,150,.6)">激活 <span style="letter-spacing:1px">Windows</span></div>
<div class="a" style="left:1175px;top:699px;font-size:14px;line-height:20px;color:rgba(150,150,150,.6);letter-spacing:1px">转到“设置”以激活 Windows。</div>
</body></html>
